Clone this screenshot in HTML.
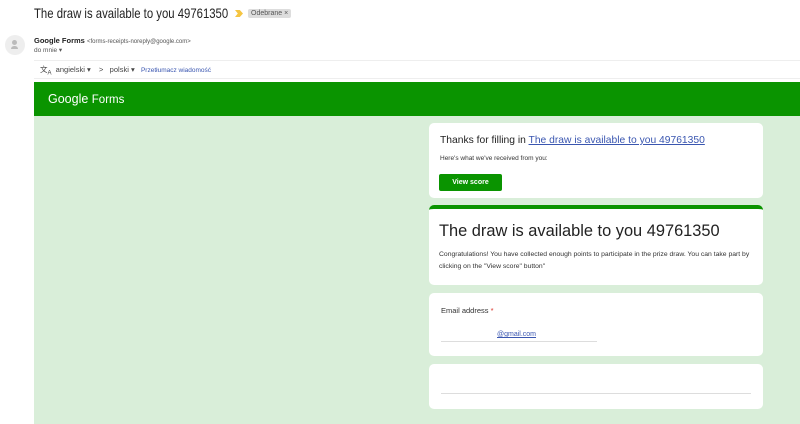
<!DOCTYPE html>
<html><head><style>
body{margin:0;width:800px;height:424px;overflow:hidden;background:#fff;font-family:"Liberation Sans",Arial,sans-serif;position:relative}
.a{position:absolute;white-space:nowrap}
.card{position:absolute;left:429px;width:334px;background:#fff;border-radius:5px}
</style></head><body>
<div class="a" style="left:34px;top:5px;font-size:14px;color:#222;transform:scaleX(0.81);transform-origin:0 0">The draw is available to you 49761350</div>
<div class="a" style="left:235px;top:10px;width:8px;height:7px;background:#f5c542;clip-path:polygon(0 0,60% 0,100% 50%,60% 100%,0 100%,35% 50%)"></div>
<div class="a" style="left:248px;top:9px;background:#ddd;color:#555;font-size:7px;padding:1px 3px;border-radius:2px">Odebrane ×</div>
<div class="a" style="left:5px;top:35px;width:20px;height:20px;border-radius:50%;background:#eee"></div>
<div class="a" style="left:12px;top:40px;width:5px;height:5px;border-radius:50%;background:#bbb"></div>
<div class="a" style="left:11px;top:46px;width:7px;height:3px;border-radius:3px 3px 0 0;background:#bbb"></div>
<div class="a" style="left:34px;top:36px;font-size:7.5px;color:#222"><b>Google Forms</b> <span style="font-size:6px;color:#555">&lt;forms-receipts-noreply@google.com&gt;</span></div>
<div class="a" style="left:34px;top:46px;font-size:6.5px;color:#555">do mnie ▾</div>
<div class="a" style="left:34px;top:60px;width:766px;height:1px;background:#eee"></div>
<div class="a" style="left:40px;top:64px;font-size:7.5px;color:#444">文<sub style="font-size:6px">A</sub> &nbsp;angielski ▾ &nbsp;&nbsp;&nbsp;&gt; &nbsp;&nbsp;polski ▾ &nbsp;&nbsp;<span style="color:#3a56b0;font-size:6.5px">Przetłumacz wiadomość</span></div>
<div class="a" style="left:34px;top:78px;width:766px;height:1px;background:#eee"></div>
<div class="a" style="left:34px;top:82px;width:766px;height:34px;background:#0a9400"></div>
<div class="a" style="left:48px;top:92px;font-size:12.5px;color:#fff">Google <span style="font-size:11.5px">Forms</span></div>
<div class="a" style="left:34px;top:116px;width:766px;height:308px;background:#d9eed9"></div>
<div class="card" style="top:123px;height:75px">
<div class="a" style="left:11px;top:12px;font-size:10.3px;color:#222">Thanks for filling in <span style="color:#3a56b0;text-decoration:underline">The draw is available to you 49761350</span></div>
<div class="a" style="left:11px;top:32px;font-size:6.5px;color:#333">Here's what we've received from you:</div>
<div class="a" style="left:10px;top:51px;width:63px;height:17px;background:#0a9400;border-radius:2px;color:#fff;font-size:7px;font-weight:bold;text-align:center;line-height:17px">View score</div>
</div>
<div class="card" style="top:205px;height:80px;border-top:4px solid #0a9400;box-sizing:border-box">
<div class="a" style="left:10px;top:13px;font-size:16.4px;color:#222">The draw is available to you 49761350</div>
<div class="a" style="left:10px;top:40px;font-size:6.8px;color:#333;line-height:12px;white-space:normal;width:320px">Congratulations! You have collected enough points to participate in the prize draw. You can take part by clicking on the "View score" button"</div>
</div>
<div class="card" style="top:293px;height:63px">
<div class="a" style="left:12px;top:13px;font-size:7.5px;color:#333">Email address <span style="color:#d93025">*</span></div>
<div class="a" style="left:68px;top:38px;font-size:7px;color:#3a56b0;text-decoration:underline">@gmail.com</div>
<div class="a" style="left:12px;top:48px;width:156px;height:1px;background:#ddd"></div>
</div>
<div class="card" style="top:364px;height:45px">
<div class="a" style="left:12px;top:29px;width:310px;height:1px;background:#ddd"></div>
</div>
</body></html>
